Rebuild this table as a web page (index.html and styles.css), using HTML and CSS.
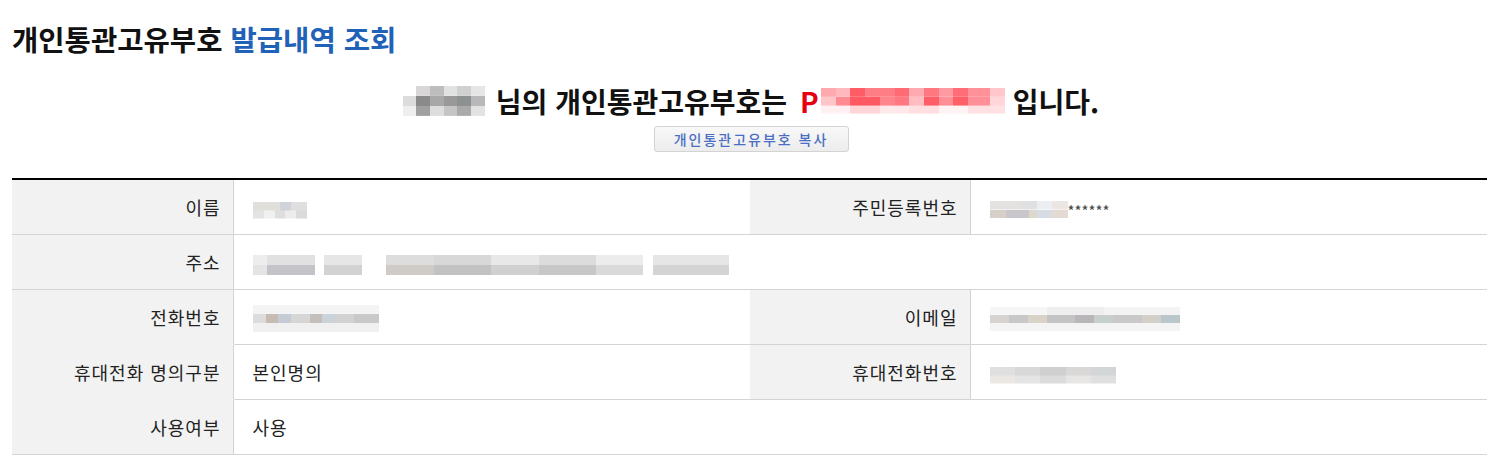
FILE: index.html
```html
<!DOCTYPE html>
<html lang="ko">
<head>
<meta charset="utf-8">
<title>개인통관고유부호 발급내역 조회</title>
<link rel="stylesheet" href="styles.css">
</head>
<body>
<div class="page">
  <h1 class="title">개인통관고유부호 <span class="accent">발급내역 조회</span></h1>
  <div class="summary">
    <p class="headline"><span class="blur blur-name"></span><span class="t1">님의 개인통관고유부호는</span><span class="code">P<span class="blur blur-code"></span></span><span class="t3">입니다.</span></p>
    <button class="copy-btn" type="button">개인통관고유부호 복사</button>
  </div>
  <table class="info">
    <colgroup>
      <col class="c-th1"><col class="c-td1"><col class="c-th2"><col class="c-td2">
    </colgroup>
    <tbody>
      <tr>
        <th>이름</th>
        <td><span class="blur blur-v1"></span></td>
        <th>주민등록번호</th>
        <td><span class="blur blur-v2"></span><span class="mask">******</span></td>
      </tr>
      <tr>
        <th>주소</th>
        <td colspan="3"><span class="blur blur-addr"></span></td>
      </tr>
      <tr>
        <th class="open">전화번호</th>
        <td><span class="blur blur-tel"></span></td>
        <th>이메일</th>
        <td><span class="blur blur-mail"></span></td>
      </tr>
      <tr>
        <th class="open">휴대전화 명의구분</th>
        <td>본인명의</td>
        <th>휴대전화번호</th>
        <td><span class="blur blur-mobile"></span></td>
      </tr>
      <tr>
        <th>사용여부</th>
        <td colspan="3">사용</td>
      </tr>
    </tbody>
  </table>
</div>
</body>
</html>
```
FILE: styles.css
```css
html, body {
  margin: 0;
  padding: 0;
  background: #fff;
}
body {
  font-family: "Noto Sans CJK KR", "Noto Sans", sans-serif;
  color: #222;
}
.page {
  width: 1475px;
  margin-left: 12px;
  padding-top: 19px;
}
.title {
  margin: 0;
  font-size: 28.6px;
  font-weight: 700;
  line-height: 40px;
  color: #111;
}
.accent {
  color: #1f62b7;
}
.summary {
  display: flex;
  flex-direction: column;
  align-items: center;
  padding-top: 23px;
  padding-left: 3px;
}
.headline {
  margin: 0;
  font-size: 28px;
  font-weight: 700;
  line-height: 38px;
  color: #111;
  display: flex;
  align-items: center;
  white-space: pre;
}
.t1 {
  margin-left: 11px;
}
.code {
  color: #e60012;
  margin-left: 13px;
  display: inline-flex;
  align-items: center;
}
.t3 {
  margin-left: 8px;
}
.copy-btn {
  margin-top: 6px;
  width: 195px;
  height: 26px;
  border: 1px solid #d3d3d3;
  border-radius: 3px;
  background: linear-gradient(#f8f8f8, #ececec);
  color: #4a6fc2;
  font-family: "Noto Sans CJK KR", sans-serif;
  font-size: 14px;
  font-weight: 500;
  letter-spacing: 2px;
  padding: 0;
}
.info {
  margin-top: 26px;
  width: 1475px;
  border-collapse: collapse;
  table-layout: fixed;
  border-top: 2px solid #000;
  font-size: 18px;
  letter-spacing: 1px;
}
.c-th1 { width: 221px; }
.c-td1 { width: 517px; }
.c-th2 { width: 220px; }
.c-td2 { width: 517px; }
.info th, .info td {
  height: 54px;
  padding: 0;
  border-bottom: 1px solid #d4d4d4;
  vertical-align: middle;
  font-weight: 400;
  color: #222;
}
.info th {
  background: #f2f2f2;
  text-align: right;
  padding-right: 12px;
  border-right: 1px solid #d4d4d4;
}
.info th.open {
  border-bottom-color: #f2f2f2;
}
.info td {
  text-align: left;
  padding-left: 19px;
}
.mask {
  color: #444;
  font-size: 15px;
  letter-spacing: 0;
  vertical-align: middle;
}
.blur {
  display: inline-block;
  vertical-align: middle;
}
.blur-name {
  width: 82px;
  height: 30px;
  background:
    linear-gradient(90deg, #fff 0 16%, #d8d6d6 16% 33%, #bdbdbd 33% 50%, #e2e2e2 50% 66%, #cfd0d0 66% 83%, #e6e6e6 83%) top/100% 33% no-repeat,
    linear-gradient(90deg, #dcdcdc 0 16%, #8a8a8a 16% 33%, #a8a8a8 33% 50%, #999 50% 66%, #8c9191 66% 83%, #b8b8b8 83%) center/100% 34% no-repeat,
    linear-gradient(90deg, #eee 0 16%, #a0a0a0 16% 33%, #ddd 33% 50%, #c5c5c5 50% 66%, #aaa 66% 83%, #e2e2e2 83%) bottom/100% 33% no-repeat;
}
.blur-code {
  width: 184px;
  height: 26px;
  margin-left: 2px;
  background:
    linear-gradient(90deg, #ffa8ae 0 8%, #ffb8bd 8% 16%, #ff5c66 16% 24%, #ff7d85 24% 40%, #ff6a73 40% 48%, #ffaab0 48% 56%, #ff7880 56% 64%, #ff9aa1 64% 72%, #ff6e78 72% 80%, #ff9199 80% 92%, #ffc7cb 92%) top/100% 34% no-repeat,
    linear-gradient(90deg, #ffc5c9 0 8%, #ff8a92 8% 16%, #ff5a64 16% 32%, #ff848c 32% 40%, #ff7780 40% 48%, #ffbcc1 48% 56%, #ff5e68 56% 64%, #ff8e96 64% 72%, #ff5f69 72% 80%, #ff8f97 80% 92%, #ffd7da 92%) center/100% 33% no-repeat,
    linear-gradient(90deg, #fff0f1 0 16%, #ffd5d8 16% 32%, #ffe9ea 32% 48%, #ffdfe1 48% 64%, #fff3f4 64% 80%, #ffe0e3 80%) bottom/100% 33% no-repeat;
}
.blur-v1 {
  width: 54px;
  height: 17px;
  background:
    linear-gradient(90deg, #e0dfdc 0 50%, #cfd3da 50% 70%, #dfdfdf 70%) top/100% 50% no-repeat,
    linear-gradient(90deg, #e3e3e3 0 20%, #f0f0f0 20% 40%, #dedede 40% 60%, #ececec 60% 80%, #dadada 80%) bottom/100% 50% no-repeat;
}
.blur-v2 {
  width: 78px;
  height: 17px;
  background:
    linear-gradient(90deg, #e4e2e1 0 40%, #dfe0e1 40% 60%, #eceef1 60% 80%, #ebe6e4 80%) top/100% 50% no-repeat,
    linear-gradient(90deg, #d6d0c8 0 20%, #c9c6cc 20% 50%, #ded8cc 50% 60%, #d6dce4 60% 80%, #e3dad4 80%) bottom/100% 50% no-repeat;
}
.blur-addr {
  width: 476px;
  height: 20px;
  background:
    linear-gradient(90deg, #ededed 0 3%, #e1e1e1 3% 13%, #fff 13% 15%, #e6e6e6 15% 23%, #fff 23% 28%, #dedddd 28% 38%, #d8d8d8 38% 50%, #e8e8e8 50% 60%, #dcdcdc 60% 72%, #ececec 72% 82%, #fff 82% 84%, #e6e6e6 84%) top/100% 50% no-repeat,
    linear-gradient(90deg, #e4e4e4 0 3%, #c4c4c8 3% 13%, #fff 13% 15%, #d2d2d2 15% 23%, #fff 23% 28%, #cfccc8 28% 38%, #c2c2c2 38% 50%, #d0d0d0 50% 60%, #c7c7c7 60% 72%, #dadada 72% 82%, #fff 82% 84%, #d4d4d4 84%) bottom/100% 50% no-repeat;
}
.blur-tel {
  width: 126px;
  height: 27px;
  background:
    linear-gradient(90deg, #f4f4f4 0 100%) top/100% 33% no-repeat,
    linear-gradient(90deg, #dcdcdc 0 10%, #c6bcb3 10% 20%, #c5ccd5 20% 30%, #d6d6d6 30% 45%, #c4bfbb 45% 55%, #cbd3da 55% 65%, #d2d2d2 65% 80%, #c9c9c9 80%) center/100% 34% no-repeat,
    linear-gradient(90deg, #f0f0f0 0 100%) bottom/100% 33% no-repeat;
}
.blur-mail {
  width: 190px;
  height: 24px;
  background:
    linear-gradient(90deg, #f6f6f6 0 30%, #eeeeee 30% 60%, #f3f3f3 60% 100%) top/100% 33% no-repeat,
    linear-gradient(90deg, #d6d3d1 0 10%, #c8c8c8 10% 20%, #d9d2c6 20% 30%, #c4c4c4 30% 45%, #b9b6b9 45% 55%, #c6cfca 55% 65%, #c9c9c9 65% 80%, #d4cfc9 80% 90%, #b9c6cb 90%) center/100% 34% no-repeat,
    linear-gradient(90deg, #f4f4f4 0 100%) bottom/100% 33% no-repeat;
}
.blur-mobile {
  width: 126px;
  height: 17px;
  background:
    linear-gradient(90deg, #e0dfdf 0 20%, #d8d8d8 20% 40%, #cfcfcf 40% 60%, #dad8d6 60% 80%, #d3d6d7 80%) top/100% 50% no-repeat,
    linear-gradient(90deg, #ebe7e3 0 20%, #e4e4e4 20% 40%, #dcdcdc 40% 60%, #e8e6e4 60% 80%, #e0e0e0 80%) bottom/100% 50% no-repeat;
}
```
